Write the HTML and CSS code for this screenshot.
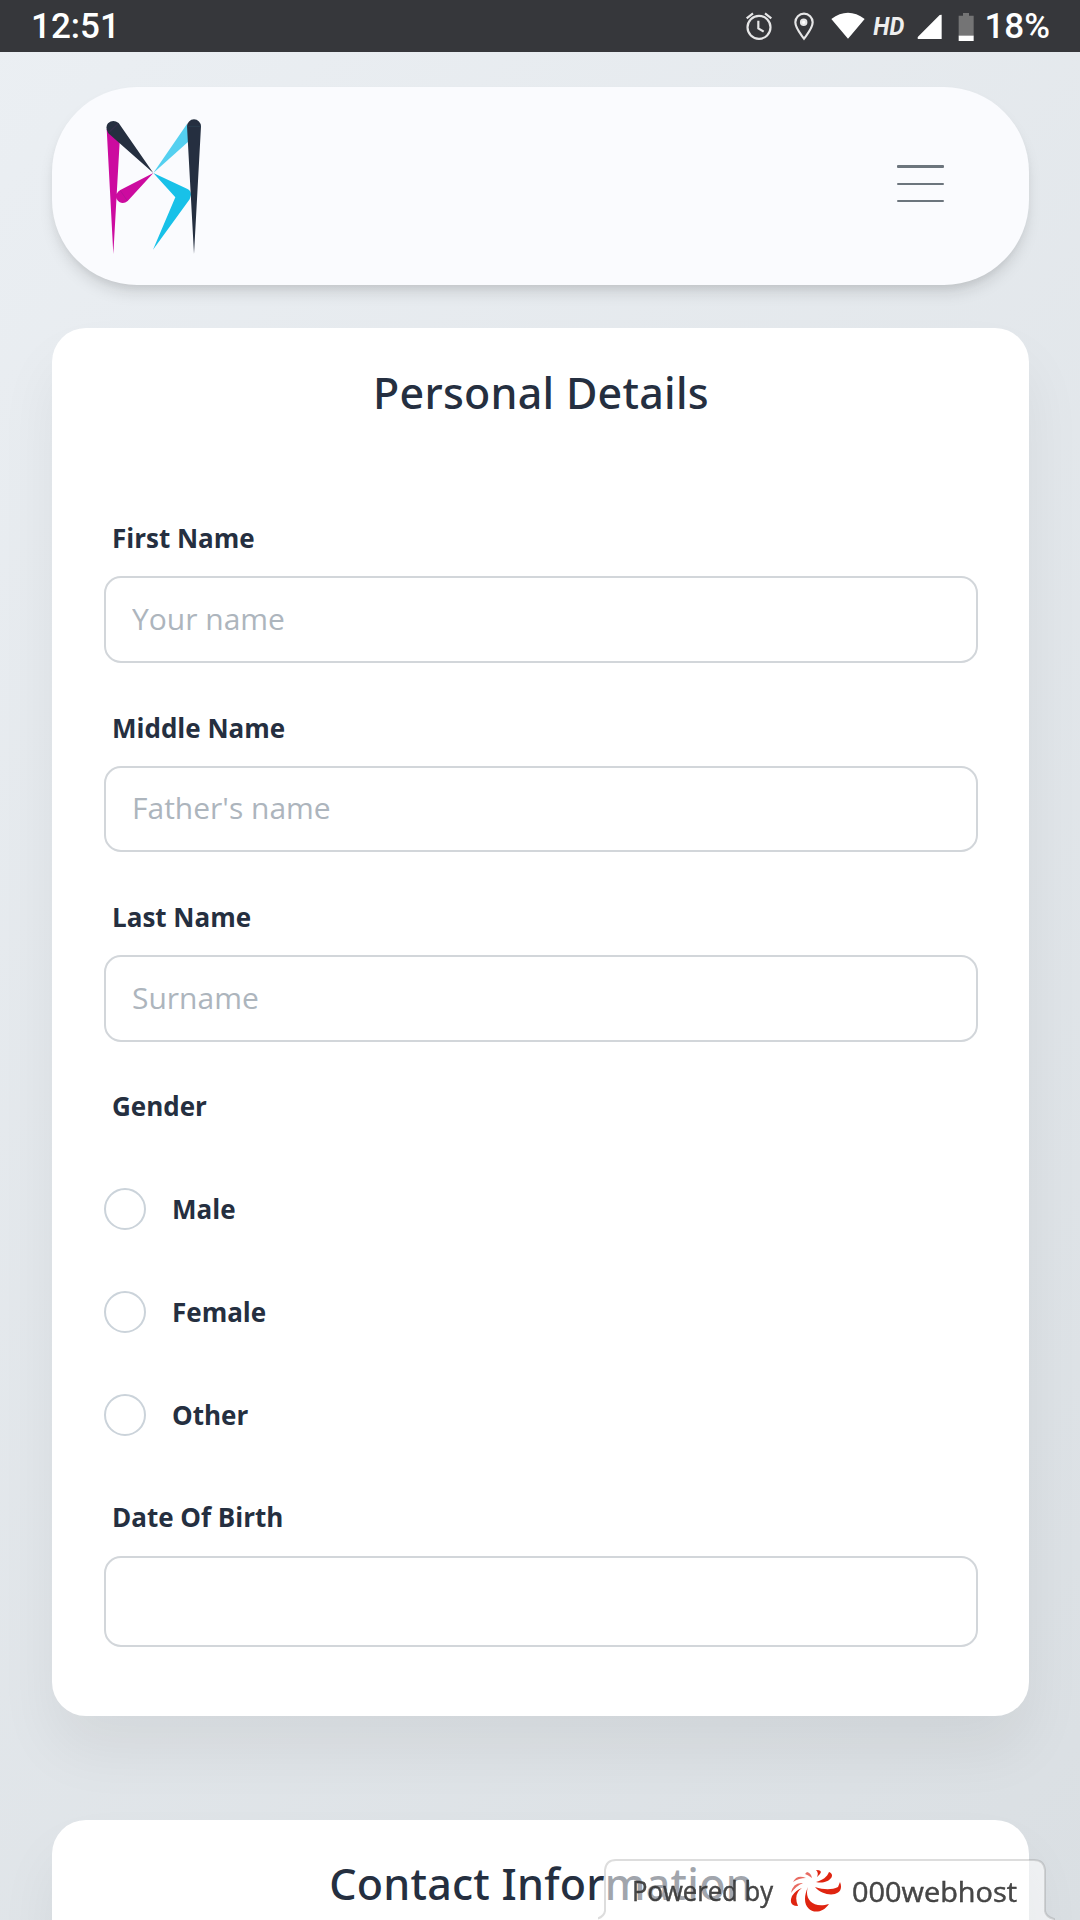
FILE: index.html
```html
<!DOCTYPE html>
<html lang="en">
<head>
<meta charset="utf-8">
<title>Personal Details</title>
<link rel="stylesheet" href="styles.css">
</head>
<body>
<div class="statusbar">
  <span class="clock">12:51</span>
  <svg class="status-icons" width="240" height="51" viewBox="0 0 720 153" fill="none" stroke="#fff">
    <g stroke="#e6e6e7" stroke-width="6.5">
      <circle cx="45" cy="79" r="34.500"/>
      <path d="M43 59v23l16 10M8 52l19-15M82 52 63 37"/>
      <path d="M180 113c-14-19-26-32-26-49a26 26 0 0 1 52 0c0 17-12 30-26 49z"/>
      <circle cx="179" cy="64" r="8" fill="#fff"/>
    </g>
    <path fill="#fff" stroke="none" d="M262 54Q312 16 362 54L312 113zM593 41v73H522q-3-3 0-7l65-65z"/>
    <text class="hd" x="388" y="102" textLength="93" lengthAdjust="spacingAndGlyphs">HD</text>
    <path fill="#747475" stroke="none" d="M657 36h18v8h14v62h-45V44h13z"/>
    <path fill="#fff" stroke="none" d="M644 104h45v16h-45z"/>
  </svg>
  <span class="charge">18%</span>
</div>
<main class="page">
  <nav class="navbar">
    <svg class="logo" width="95" height="135" viewBox="80 57 285 405">
      <path fill="#cc0b9f" d="M82 86 121 125 102 462zM222 219 145 303Q133 313 120 306Q108 297 112 282Q115 274 123 270z"/>
      <path fill="#54d0f0" d="M222 219 323 72 330 122z"/>
      <path fill="#18c1e8" d="M222 219 323 266Q335 270 335 284L331 298 221 449 288 292z"/>
      <path fill="#252f40" d="M222 219 87 100Q76 82 86 70Q101 56 118 69zM323 79a21 21 0 0 1 42 0L344 462z"/>
      <path fill="none" stroke="#74257b" stroke-width=".8" d="M90 96 116 71M123 272 143 301"/>
      <path fill="none" stroke="#32586d" d="M323 79h42"/>
    </svg>
    <svg class="menu" width="47" height="37" fill="#6c757d">
      <rect width="47" height="3" rx="1"/><rect y="18" width="47" height="2" rx="1"/><rect y="35" width="47" height="2" rx="1"/>
    </svg>
  </nav>
  <section class="card">
    <h2 class="title">Personal Details</h2>
    <label class="field"><span class="name">First Name</span><input class="input" type="text" placeholder="Your name"></label>
    <label class="field"><span class="name">Middle Name</span><input class="input input-middle" type="text" placeholder="Father's name"></label>
    <label class="field"><span class="name">Last Name</span><input class="input" type="text" placeholder="Surname"></label>
    <div class="gender">
      <span class="name">Gender</span>
      <label class="option"><input class="radio" type="radio" name="gender">Male</label>
      <label class="option"><input class="radio" type="radio" name="gender">Female</label>
      <label class="option"><input class="radio" type="radio" name="gender">Other</label>
    </div>
    <label class="field"><span class="name">Date Of Birth</span><input class="input input-date" type="text"></label>
  </section>
  <section class="card card-contact">
    <h2 class="title">Contact Information</h2>
  </section>
</main>
<svg class="host-badge" width="460" height="62" viewBox="0 0 460 62">
  <path d="M-2 61Q6 59 7 53V12Q8 2 18 2H436Q446 2 447 12V53Q448 59 456 61V70H-2z" fill="#fff" fill-opacity=".57" stroke="#777" stroke-opacity=".25" stroke-width="2"/>
  <g class="host-text">
    <text x="34" y="43" textLength="141" lengthAdjust="spacingAndGlyphs">Powered by</text>
    <text x="254" y="44" textLength="165" lengthAdjust="spacingAndGlyphs">000webhost</text>
  </g>
  <g class="host-mark" fill="#df2410">
    <path d="M210 29C206 40 214 51 231 46C221 61 199 53 210 29z"/>
    <path d="M217 29C226 32 234 32 240 29L242 24C248 39 226 40 217 29z"/>
    <path d="M218 24C225 22 229 19 231 14C239 17 230 27 218 24z"/>
    <path d="M218 12Q225 12 222 16L219 19Q221 15 218 12z"/>
    <g fill="#e86b62">
      <path d="M209 14Q213 15 214 20Q210 17 207 16z"/>
      <path d="M208 20Q199 16 195 24Q201 20 208 20z"/>
      <path d="M205 25Q195 24 193 35Q198 28 205 25z"/>
    </g>
    <path d="M204 30Q195 36 200 48Q190 48 194 38Q198 32 204 30z"/>
  </g>
</svg>
</body>
</html>
```
FILE: styles.css
```css
* { box-sizing: border-box; }
body {
  margin: 0;
  height: 1920px;
  overflow: hidden;
  background: linear-gradient(135deg, #ebeff3, #dadfe3);
  font-family: "Open Sans", "Noto Sans", sans-serif;
  color: #252f40;
}
.statusbar {
  display: flex;
  align-items: center;
  height: 52px;
  padding: 0 30px 0 31px;
  background: #36373b;
  color: #fff;
  font: 500 35px/54px Roboto, sans-serif;
}
.clock { flex: 1; padding-top: 1px; }
.charge { padding-top: 1px; }
.hd { fill: #eee; stroke: none; font: italic 700 76px Roboto, sans-serif; }
.page { height: 1868px; overflow: hidden; padding: 35px 51px 0 52px; }
.navbar {
  display: flex;
  justify-content: space-between;
  height: 198px;
  padding: 32px 85px 0 54.4px;
  border-radius: 85px;
  background: #fafbfe;
  box-shadow: 0 10px 16px -3px rgba(20, 20, 20, .13), 0 5px 8px -3px rgba(20, 20, 20, .07);
}
.menu { margin-top: 46px; }
.card {
  height: 1388px;
  margin-top: 43px;
  padding: 39px 51px 0 52px;
  border-radius: 34px;
  background: #fff;
  box-shadow: 0 35px 60px rgba(0, 0, 0, .06);
}
.card-contact { margin-top: 104px; padding-top: 38px; }
.title {
  margin: 0 0 98px;
  font: 500 43px/52px "Noto Sans", sans-serif;
  letter-spacing: .25px;
  text-align: center;
}
.field { display: block; height: 189.5px; }
.name {
  display: block;
  padding-left: 8px;
  font-size: 26px;
  font-weight: 700;
  line-height: 42px;
}
.input {
  display: block;
  width: 874px;
  height: 87px;
  margin-top: 17px;
  padding: 0 26px 2px;
  border: 2px solid #d2d6da;
  border-radius: 17px;
  background: #fff;
  font: 400 30px/42px "Open Sans", sans-serif;
}
.input::placeholder { color: #adb5bd; opacity: 1; }
.input-middle { height: 86px; }
.input-date { height: 91px; margin-top: 18px; }
.gender { height: 410px; }
.gender .name { margin-bottom: 61px; line-height: 41px; }
.option {
  display: flex;
  align-items: center;
  gap: 26px;
  height: 42px;
  margin-bottom: 61px;
  font-size: 26px;
  font-weight: 700;
}
.radio {
  appearance: none;
  width: 42px;
  height: 42px;
  margin: 0;
  border: 2px solid #cbd3da;
  border-radius: 50%;
}
.host-badge { position: absolute; left: 598px; top: 1858px; }
.host-text {
  fill: #333;
  fill-opacity: .9;
  stroke: #333;
  stroke-width: .4px;
  font: 400 27px "Open Sans", sans-serif;
  filter: blur(.7px);
}
.host-mark { filter: blur(.5px); }
```
